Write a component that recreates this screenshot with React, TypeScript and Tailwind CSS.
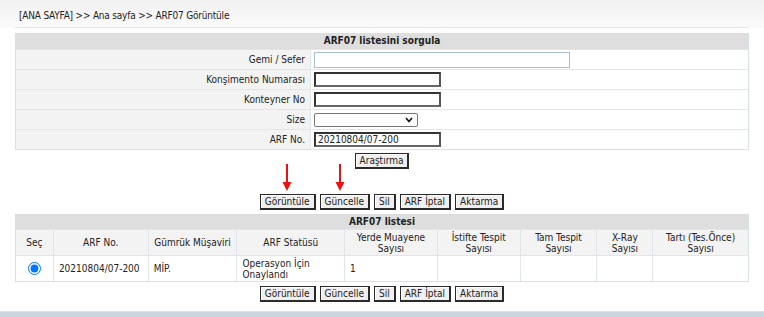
import React from 'react';

const font = { fontFamily: '"DejaVu Sans Condensed", "DejaVu Sans", Verdana, sans-serif' };

const Btn: React.FC<{ label: string }> = ({ label }) => (
    <button
        type="button"
        className="h-[16px] px-[4px] text-[10px] leading-[12px] text-[#222] bg-[#efefef] border border-[#2a2a2a] border-b-2 border-r-2 shadow-[inset_1px_1px_0_#ffffff]"
    >
        {label}
    </button>
);

const ButtonRow: React.FC = () => (
    <div className="flex justify-center gap-[4px]">
        {['Görüntüle', 'Güncelle', 'Sil', 'ARF İptal', 'Aktarma'].map(b => (
            <Btn key={b} label={b} />
        ))}
    </div>
);

const inputCls = 'h-[15px] w-[127px] bg-white border-2 border-t-[#333] border-l-[#333] border-r-[#555] border-b-[#666] px-[2px] text-[10px] leading-[10px] text-[#222] outline-none';

const formRows = [
    { label: 'Gemi / Sefer', type: 'wide' },
    { label: 'Konşimento Numarası', type: 'input' },
    { label: 'Konteyner No', type: 'input' },
    { label: 'Size', type: 'select' },
    { label: 'ARF No.', type: 'input', value: '20210804/07-200' },
];

const columns = [
    { w: 'w-[37px]', title: ['Seç'] },
    { w: 'w-[95px]', title: ['ARF No.'] },
    { w: 'w-[89px]', title: ['Gümrük Müşaviri'] },
    { w: 'w-[108px]', title: ['ARF Statüsü'] },
    { w: 'w-[93px]', title: ['Yerde Muayene', 'Sayısı'] },
    { w: 'w-[83px]', title: ['İstifte Tespit', 'Sayısı'] },
    { w: 'w-[77px]', title: ['Tam Tespit', 'Sayısı'] },
    { w: 'w-[56px]', title: ['X-Ray', 'Sayısı'] },
    { w: 'w-[96px]', title: ['Tartı (Tes.Önce)', 'Sayısı'] },
];

const Arrow: React.FC<{ left: string }> = ({ left }) => (
    <svg className={`absolute top-[164px] ${left}`} width="10" height="27" viewBox="0 0 10 27">
        <line x1="5" y1="0" x2="5" y2="19" stroke="#ee1111" strokeWidth="2" />
        <polygon points="0.5,18 9.5,18 5,27" fill="#ee1111" />
    </svg>
);

export default function App() {
    return (
        <div className="relative w-[764px] h-[317px] bg-white text-[#222] overflow-hidden" style={font}>
            <div className="h-[28px] bg-gradient-to-b from-[#f1f1f1] to-[#fbfbfb]">
                <div className="ml-[15px] mr-[15px] h-[28px] border-b border-[#e6e6e6] pl-[4px] pt-[10px] text-[10px] leading-[12px] tracking-[-0.2px]">
                    [ANA SAYFA] &gt;&gt; Ana sayfa &gt;&gt; ARF07 Görüntüle
                </div>
            </div>

            <div className="ml-[15px] mt-[5px] w-[734px] border-x border-b border-[#d7e1ea] text-[10px]">
                <div className="h-[16px] bg-[#dedede] text-center font-bold leading-[16px]">ARF07 listesini sorgula</div>
                {formRows.map(row => (
                    <div key={row.label} className="flex h-[20px] border-t border-[#dfe6ec]">
                        <div className="w-[295px] bg-[#f3f3f3] border-r border-[#dfe6ec] pr-[5px] text-right leading-[19px]">{row.label}</div>
                        <div className="flex-1 flex items-center pl-[3px]">
                            {row.type === 'wide' && (
                                <input className="h-[16px] w-[256px] bg-white border border-[#a9bfd5] outline-none" />
                            )}
                            {row.type === 'input' && (
                                <input className={inputCls} defaultValue={row.value ?? ''} />
                            )}
                            {row.type === 'select' && (
                                <div className="relative h-[14px] w-[104px] bg-white border border-[#767676] rounded-[2px]">
                                    <svg className="absolute right-[4px] top-[3px]" width="8" height="6" viewBox="0 0 8 6">
                                        <polyline points="1,1 4,4.5 7,1" fill="none" stroke="#111" strokeWidth="1.6" />
                                    </svg>
                                </div>
                            )}
                        </div>
                    </div>
                ))}
            </div>

            <div className="mt-[3px] flex justify-center">
                <Btn label="Araştırma" />
            </div>

            <div className="mt-[25px]">
                <ButtonRow />
            </div>

            <Arrow left="left-[282px]" />
            <Arrow left="left-[335px]" />

            <div className="ml-[15px] mt-[4px] w-[734px] border-x border-b border-[#d7e1ea] text-[10px]">
                <div className="h-[15px] bg-[#dedede] text-center font-bold leading-[15px]">ARF07 listesi</div>
                <div className="flex h-[26px] bg-[#f3f3f3] border-t border-[#dfe6ec]">
                    {columns.map((c, i) => (
                        <div
                            key={i}
                            className={`${c.w} flex flex-col justify-center text-center leading-[11px] ${i > 0 ? 'border-l border-[#dfe6ec]' : ''}`}
                        >
                            {c.title.map(t => <span key={t}>{t}</span>)}
                        </div>
                    ))}
                </div>
                <div className="flex h-[26px] bg-white border-t border-[#dfe6ec]">
                    {columns.map((c, i) => (
                        <div
                            key={i}
                            className={`${c.w} flex items-center leading-[11px] ${i > 0 ? 'border-l border-[#dfe6ec] pl-[5px]' : 'justify-center'}`}
                        >
                            {i === 0 && (
                                <input type="radio" defaultChecked className="w-[13px] h-[13px] m-0 accent-[#0075ff]" />
                            )}
                            {i === 1 && '20210804/07-200'}
                            {i === 2 && 'MİP.'}
                            {i === 3 && (
                                <span>Operasyon İçin<br />Onaylandı</span>
                            )}
                            {i === 4 && '1'}
                        </div>
                    ))}
                </div>
            </div>

            <div className="mt-[4px]">
                <ButtonRow />
            </div>

            <div className="absolute left-0 right-0 bottom-0 h-[6px] bg-[#c9d6e2] border-t border-[#d9e3ec]" />
        </div>
    );
}
